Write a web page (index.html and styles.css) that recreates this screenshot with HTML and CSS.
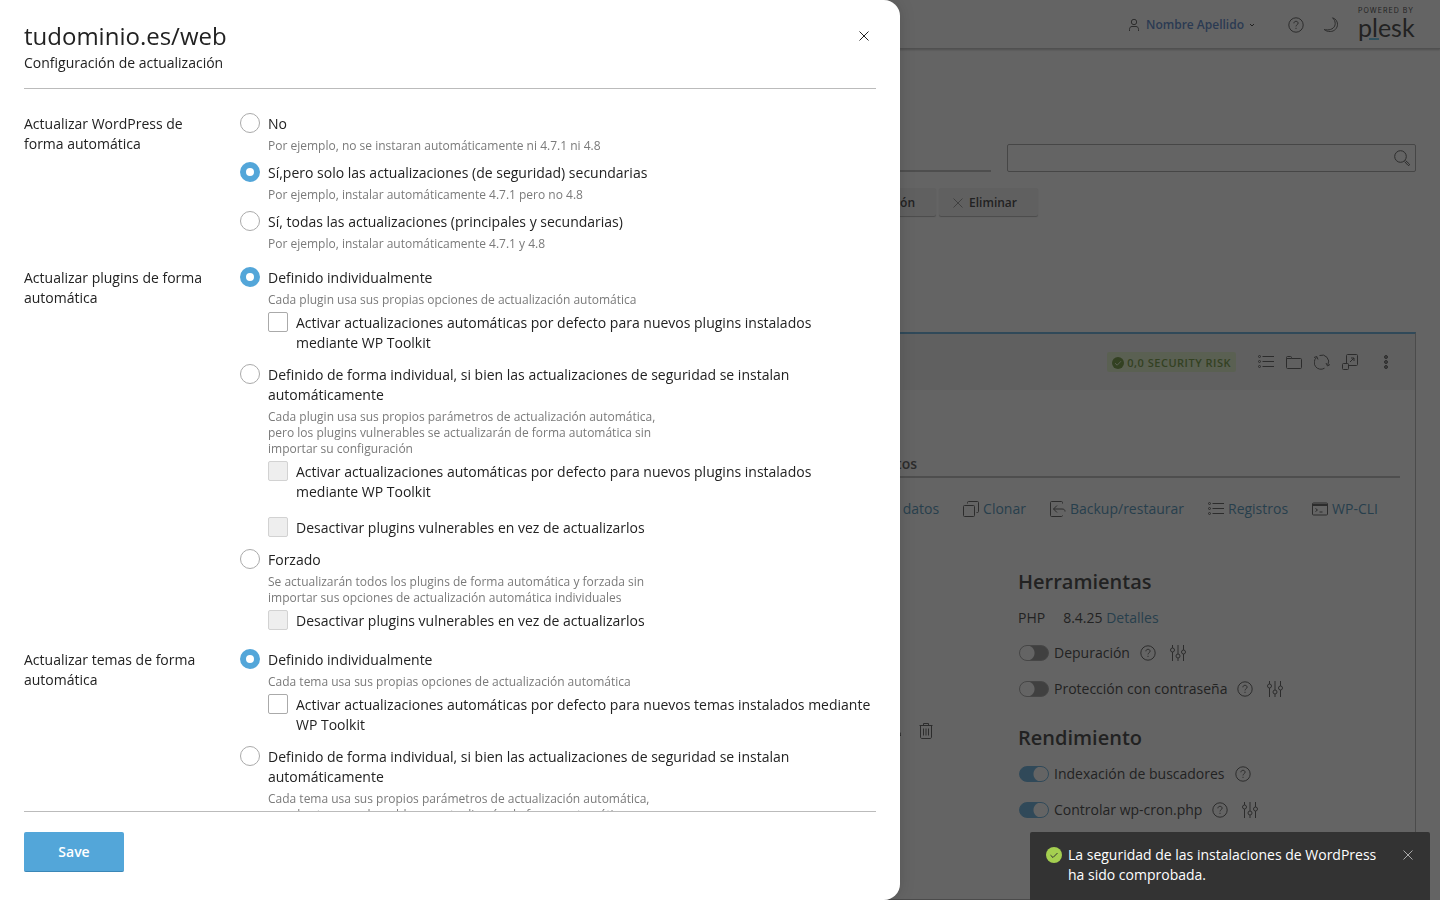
FILE: index.html
```html
<!DOCTYPE html>
<html lang="es">

<head>
    <meta charset="UTF-8">
    <meta name="viewport" content="width=device-width, initial-scale=1.0">
    <title>tudominio.es/web</title>
    <link rel="stylesheet" href="styles.css">
</head>

<body>
    <!-- shared icons -->
    <svg class="sprite" aria-hidden="true">
        <symbol id="i-help" viewBox="0 0 16 16">
            <circle cx="8" cy="8" r="7.2" />
            <path d="M5.9 6.3c0-1.2.9-2 2.1-2s2.1.8 2.1 1.9c0 1.5-2.1 1.6-2.1 3.2M8 10.8v1.1" />
        </symbol>
        <symbol id="i-list" viewBox="0 0 16 16">
            <circle cx="1.5" cy="2.5" r="1" /><circle cx="1.5" cy="7.5" r="1" /><circle cx="1.5" cy="12.5" r="1" />
            <path d="M4.500 2.500H16M4.500 7.500H16M4.500 12.500H16" />
        </symbol>
        <symbol id="i-sliders" viewBox="0 0 16 16">
            <path d="M2.500 0v3M2.500 7v9M8 0v9M8 13v3M13.500 0v5M13.500 9v7" />
            <circle cx="2.500" cy="5" r="2" /><circle cx="8" cy="11" r="2" /><circle cx="13.500" cy="7" r="2" />
        </symbol>
        <symbol id="i-cross" viewBox="0 0 16 16">
            <path d="M3.500 3.500l9 9M12.500 3.500l-9 9" />
        </symbol>
        <symbol id="i-user" viewBox="0 0 16 16">
            <circle cx="8" cy="5" r="2.700" />
            <path d="M3.500 14v-1.500c0-2 1-3 2.500-3h4c1.500 0 2.500 1 2.500 3V14" />
        </symbol>
    </svg>

    <div class="page">
        <header class="topbar">
            <a class="user" href="#">
                <svg class="icon"><use href="#i-user" /></svg>
                <span>Nombre Apellido</span>
                <svg class="caret" viewBox="0 0 8 8"><path d="M2 3l2 2 2-2" /></svg>
            </a>
            <button class="icon-btn" type="button" aria-label="Ayuda"><svg class="icon"><use href="#i-help" /></svg></button>
            <button class="icon-btn" type="button" aria-label="Tema"><svg class="icon" viewBox="0 0 16 16"><path d="M9.500.8c3 .8 5 3.400 5 6.500 0 4-3.200 7.200-7.200 7.200-2.600 0-4.800-.6-6.100-2 1 .3 2.100.4 3.300.4 4.500 0 7.700-2.700 7.700-6.300 0-2.200-.9-4.300-2.700-5.800z" /></svg></button>
            <div class="brand">
                <span class="brand__by">POWERED BY</span>
                <span class="brand__name">plesk</span>
            </div>
        </header>

        <main class="main">
            <div class="filters">
                <div class="filters__tabs"></div>
                <div class="search">
                    <input type="text" aria-label="Buscar">
                    <svg class="icon" viewBox="0 0 16 16"><circle cx="6.500" cy="6.500" r="5.800" /><path d="M10.500 11.500l3.500 3.800c.9.700 2-.5 1.300-1.300l-3.800-3.500" /></svg>
                </div>
            </div>

            <div class="toolbar">
                <button class="btn" type="button">Configuración</button>
                <button class="btn" type="button"><svg class="icon"><use href="#i-cross" /></svg>Eliminar</button>
            </div>

            <section class="site">
                <div class="site__head">
                    <span class="badge">
                        <svg class="badge__icon" viewBox="0 0 12 12"><circle cx="6" cy="6" r="6" /><path d="M3 6.200l2.200 2L9 4.200" /></svg>
                        0,0 SECURITY RISK
                    </span>
                    <div class="site__actions">
                        <button class="icon-btn" type="button" aria-label="Registros"><svg class="icon"><use href="#i-list" /></svg></button>
                        <button class="icon-btn" type="button" aria-label="Archivos"><svg class="icon" viewBox="0 0 16 16"><path d="M.5 4.500v-1c0-.6.400-1 1-1h3c.6 0 1 .4 1 1v1h9c.6 0 1 .4 1 1v8c0 .6-.4 1-1 1h-13c-.6 0-1-.4-1-1zh5" /></svg></button>
                        <button class="icon-btn" type="button" aria-label="Actualizar"><svg class="icon" viewBox="0 0 16 16"><path d="M5.500 1.500A6.700 6.700 0 0 1 13.800 11M16 10.500l-2.500 1.500-1.500-3M0 3.500L2.800 2.500 4 5.500M10.500 14.200A6.700 6.700 0 0 1 2.500 3.500" /></svg></button>
                        <button class="icon-btn" type="button" aria-label="Abrir"><svg class="icon" viewBox="0 0 16 16"><path d="M4.500 9V1.500c0-.6.400-1 1-1h9c.6 0 1 .4 1 1v9c0 .6-.4 1-1 1H7M8 8l4-4M9 4h3v3" /><rect x=".5" y="9.500" width="6" height="6" rx="1" /></svg></button>
                    </div>
                    <button class="icon-btn" type="button" aria-label="Más"><svg class="icon icon--dots" viewBox="0 0 16 16"><circle cx="8" cy="3" r="1.500" /><circle cx="8" cy="8" r="1.500" /><circle cx="8" cy="13" r="1.500" /></svg></button>
                </div>

                <div class="site__body">
                    <div class="tabs"><a href="#">Complementos</a></div>

                    <nav class="links">
                        <a href="#">Base de datos</a>
                        <a href="#"><svg class="icon" viewBox="0 0 16 16"><rect x=".5" y="4.500" width="11" height="11" rx="1" /><path d="M4.500 2.500v-1c0-.6.400-1 1-1h9c.6 0 1 .4 1 1v9c0 .6-.4 1-1 1h-1" /></svg>Clonar</a>
                        <a href="#"><svg class="icon" viewBox="0 0 16 16"><path d="M12.500 2.500v-1c0-.6-.4-1-1-1h-10c-.6 0-1 .4-1 1v13c0 .6.400 1 1 1h10c.6 0 1-.4 1-1M7 4.500L3.500 8 7 11.500M3.500 8H12c2 0 3 .8 3 2.500" /></svg>Backup/restaurar</a>
                        <a href="#"><svg class="icon"><use href="#i-list" /></svg>Registros</a>
                        <a href="#"><svg class="icon" viewBox="0 0 16 16"><rect x=".5" y="2" width="15" height="12" rx="1" /><path d="M1 3.500h14M1 4.500h14M3.500 7.500l2 1.500-2 1.500M7.500 11h3" /></svg>WP-CLI</a>
                    </nav>

                    <div class="columns">
                        <div class="columns__left">
                            <button class="icon-btn" type="button" aria-label="Usuario"><svg class="icon"><use href="#i-user" /></svg></button>
                            <button class="icon-btn" type="button" aria-label="Eliminar"><svg class="icon icon--trash" viewBox="0 0 16 18"><path d="M1.500 3.500h13M5.500 3.500V1.500h5v2M2.500 3.500v11.500c0 1 .6 1.500 1.500 1.500h8c.9 0 1.500-.5 1.500-1.500V3.500M5.500 6.500v7M8 6.500v7M10.500 6.500v7" /></svg></button>
                        </div>
                        <div class="tools">
                            <h2>Herramientas</h2>
                            <p class="php"><span>PHP</span><span>8.4.25 <a href="#">Detalles</a></span></p>
                            <div class="tool">
                                <label><input class="switch" type="checkbox">Depuración</label>
                                <svg class="icon"><use href="#i-help" /></svg>
                                <svg class="icon icon--sliders"><use href="#i-sliders" /></svg>
                            </div>
                            <div class="tool">
                                <label><input class="switch" type="checkbox">Protección con contraseña</label>
                                <svg class="icon"><use href="#i-help" /></svg>
                                <svg class="icon icon--sliders"><use href="#i-sliders" /></svg>
                            </div>
                            <h2>Rendimiento</h2>
                            <div class="tool">
                                <label><input class="switch" type="checkbox" checked>Indexación de buscadores</label>
                                <svg class="icon"><use href="#i-help" /></svg>
                            </div>
                            <div class="tool">
                                <label><input class="switch" type="checkbox" checked>Controlar wp-cron.php</label>
                                <svg class="icon"><use href="#i-help" /></svg>
                                <svg class="icon icon--sliders"><use href="#i-sliders" /></svg>
                            </div>
                        </div>
                    </div>
                </div>
            </section>
        </main>
    </div>

    <div class="overlay"></div>

    <form class="drawer">
        <header class="drawer__head">
            <div>
                <h1>tudominio.es/web</h1>
                <p>Configuración de actualización</p>
            </div>
            <button class="icon-btn drawer__close" type="button" aria-label="Cerrar"><svg class="icon"><use href="#i-cross" /></svg></button>
        </header>

        <div class="drawer__body">
            <div class="row" role="radiogroup" aria-labelledby="l-core">
                <div class="row__label" id="l-core">Actualizar WordPress de forma automática</div>
                <div class="row__field">
                    <div class="option">
                        <label class="check"><input type="radio" name="core">No</label>
                        <p class="hint">Por ejemplo, no se instaran automáticamente ni 4.7.1 ni 4.8</p>
                    </div>
                    <div class="option">
                        <label class="check"><input type="radio" name="core" checked>Sí,pero solo las actualizaciones (de seguridad) secundarias</label>
                        <p class="hint">Por ejemplo, instalar automáticamente 4.7.1 pero no 4.8</p>
                    </div>
                    <div class="option">
                        <label class="check"><input type="radio" name="core">Sí, todas las actualizaciones (principales y secundarias)</label>
                        <p class="hint">Por ejemplo, instalar automáticamente 4.7.1 y 4.8</p>
                    </div>
                </div>
            </div>

            <div class="row" role="radiogroup" aria-labelledby="l-plugins">
                <div class="row__label" id="l-plugins">Actualizar plugins de forma automática</div>
                <div class="row__field">
                    <div class="option">
                        <label class="check"><input type="radio" name="plugins" checked>Definido individualmente</label>
                        <p class="hint">Cada plugin usa sus propias opciones de actualización automática</p>
                        <div class="suboptions">
                            <label class="check"><input type="checkbox">Activar actualizaciones automáticas por defecto para nuevos plugins instalados mediante WP Toolkit</label>
                        </div>
                    </div>
                    <div class="option">
                        <label class="check"><input type="radio" name="plugins">Definido de forma individual, si bien las actualizaciones de seguridad se instalan automáticamente</label>
                        <p class="hint">Cada plugin usa sus propios parámetros de actualización automática, pero los plugins vulnerables se actualizarán de forma automática sin importar su configuración</p>
                        <div class="suboptions">
                            <label class="check"><input type="checkbox" disabled>Activar actualizaciones automáticas por defecto para nuevos plugins instalados mediante WP Toolkit</label>
                            <label class="check"><input type="checkbox" disabled>Desactivar plugins vulnerables en vez de actualizarlos</label>
                        </div>
                    </div>
                    <div class="option">
                        <label class="check"><input type="radio" name="plugins">Forzado</label>
                        <p class="hint">Se actualizarán todos los plugins de forma automática y forzada sin importar sus opciones de actualización automática individuales</p>
                        <div class="suboptions">
                            <label class="check"><input type="checkbox" disabled>Desactivar plugins vulnerables en vez de actualizarlos</label>
                        </div>
                    </div>
                </div>
            </div>

            <div class="row" role="radiogroup" aria-labelledby="l-themes">
                <div class="row__label" id="l-themes">Actualizar temas de forma automática</div>
                <div class="row__field">
                    <div class="option">
                        <label class="check"><input type="radio" name="themes" checked>Definido individualmente</label>
                        <p class="hint">Cada tema usa sus propias opciones de actualización automática</p>
                        <div class="suboptions">
                            <label class="check"><input type="checkbox">Activar actualizaciones automáticas por defecto para nuevos temas instalados mediante WP Toolkit</label>
                        </div>
                    </div>
                    <div class="option">
                        <label class="check"><input type="radio" name="themes">Definido de forma individual, si bien las actualizaciones de seguridad se instalan automáticamente</label>
                        <p class="hint">Cada tema usa sus propios parámetros de actualización automática, pero los temas vulnerables se actualizarán de forma automática</p>
                    </div>
                </div>
            </div>
        </div>

        <footer class="drawer__foot">
            <button class="save" type="submit">Save</button>
        </footer>
    </form>

    <div class="toast" role="status">
        <svg class="icon toast__ok" viewBox="0 0 16 16"><circle cx="8" cy="8" r="8" /><path d="M4.500 8.200l2.500 2.300 4.500-4.500" /></svg>
        <p>La seguridad de las instalaciones de WordPress ha sido comprobada.</p>
        <button class="icon-btn" type="button" aria-label="Cerrar"><svg class="icon"><use href="#i-cross" /></svg></button>
    </div>
</body>

</html>
```
FILE: styles.css
```css
* {
    box-sizing: border-box;
}

body {
    margin: 0;
    height: 100vh;
    overflow: hidden;
    font-family: "Open Sans", sans-serif;
    font-size: 14px;
    line-height: 20px;
    color: #222;
    background: #fff;
}

h1,
h2,
p {
    margin: 0;
}

a {
    color: #3484b0;
    text-decoration: none;
}

.sprite {
    position: absolute;
    width: 0;
    height: 0;
}

.icon {
    display: block;
    flex: none;
    width: 16px;
    height: 16px;
    fill: none;
    stroke: currentColor;
}

.icon-btn {
    display: block;
    padding: 0;
    border: 0;
    background: none;
    color: inherit;
}

.page .icon {
    color: #444;
}

/* page behind the drawer */

.topbar {
    display: flex;
    align-items: center;
    justify-content: flex-end;
    height: 49px;
    padding: 1px 24px 0 0;
    border-bottom: 1px solid #bbb;
    box-shadow: 0 1px 2px rgba(0, 0, 0, .3);
}

.user {
    display: flex;
    align-items: center;
    gap: 4px;
    margin-right: 32px;
    font-size: 12px;
    font-weight: 600;
    color: #3f74c4;
}

.caret {
    width: 8px;
    height: 8px;
    fill: none;
    stroke: #222;
}

.topbar .icon-btn {
    margin-right: 19px;
}

.brand {
    display: flex;
    flex-direction: column;
    align-self: flex-start;
    width: 58px;
    margin-top: 6px;
}

.brand__by {
    font: 7px/8px Inter, sans-serif;
    letter-spacing: 1px;
    white-space: nowrap;
}

.brand__name {
    position: relative;
    font: 25px/24px Lato, sans-serif;
}

.brand__name::after {
    content: "";
    position: absolute;
    left: 11px;
    bottom: -1px;
    width: 10px;
    height: 2px;
    background: #53bce6;
}

.main {
    padding: 95px 24px 0;
}

.filters {
    display: flex;
    gap: 16px;
}

.filters__tabs {
    flex: 1;
    border-bottom: 2px solid #b5b5b5;
}

.search {
    position: relative;
    width: 409px;
}

.search input {
    display: block;
    width: 100%;
    height: 28px;
    border: 1px solid #999;
    border-radius: 2px;
    background: none;
}

.search .icon {
    position: absolute;
    right: 6px;
    top: 6px;
}

.toolbar {
    display: flex;
    justify-content: flex-end;
    gap: 3px;
    margin-top: 16px;
    padding-right: 378px;
}

.btn {
    display: flex;
    align-items: center;
    gap: 3px;
    height: 28px;
    padding: 1px 21px 0 11px;
    border: 0;
    border-radius: 2px;
    background: #f0f0f0;
    box-shadow: 0 1px 1px #aaa;
    font: 600 12px/20px "Open Sans", sans-serif;
    color: #222;
}

.page .btn .icon {
    color: #888;
}

.site {
    margin-top: 116px;
    height: 568px;
    border: 1px solid #aaa;
    border-top: 2px solid #53a6d9;
}

.site__head {
    display: flex;
    align-items: center;
    justify-content: flex-end;
    height: 56px;
    padding-right: 21px;
    background: #f2f2f2;
}

.badge {
    display: flex;
    align-items: center;
    gap: 3px;
    height: 20px;
    margin-right: 22px;
    padding: 1px 5px 0;
    border-radius: 2px;
    background: #dcf0c4;
    font-size: 11px;
    font-weight: 600;
    letter-spacing: 0.5px;
    color: #5c8a22;
}

.badge__icon {
    width: 12px;
    height: 12px;
    fill: #5c8a22;
    stroke: #dcf0c4;
}

.badge__icon circle {
    stroke: none;
}

.site__actions {
    display: flex;
    gap: 12px;
    margin-right: 20px;
}

.icon--dots {
    fill: #888;
}

.site__body {
    padding: 64px 15px 0;
}

.tabs {
    padding: 0 483px 2px 0;
    border-bottom: 2px solid #b5b5b5;
    text-align: right;
    font-weight: 600;
}

.tabs a {
    display: block;
    color: #444;
}

.links {
    display: flex;
    justify-content: flex-end;
    gap: 24px;
    margin-top: 21px;
    padding-right: 22px;
}

.links a {
    display: flex;
    align-items: center;
    gap: 4px;
}

.columns {
    display: flex;
    margin-top: 50px;
}

.columns__left {
    display: flex;
    flex: 1;
    align-items: flex-start;
    justify-content: flex-end;
    gap: 14px;
    padding: 153px 84px 0 0;
}

.icon--trash {
    height: 18px;
}

.tools {
    width: 382px;
}

.tools h2 {
    margin-bottom: 13px;
    font-size: 20px;
    line-height: 26px;
    font-weight: 600;
}

.tools h2 ~ h2 {
    margin-top: 26px;
}

.php {
    display: flex;
    gap: 18px;
    margin-bottom: 15px;
}

.tool {
    display: flex;
    align-items: center;
    gap: 14px;
    margin-bottom: 16px;
}

.tool label {
    display: flex;
    align-items: center;
    gap: 4px;
    margin-right: -4px;
}

.switch {
    appearance: none;
    width: 30px;
    height: 16px;
    margin: 0 1px;
    border: 1px solid #999;
    border-radius: 8px;
    background: radial-gradient(circle at 7px 7px, #fff 7px, #888 8px);
}

.switch:checked {
    border-color: #53a6d9;
    background: radial-gradient(circle at 21px 7px, #fff 7px, #53a6d9 8px);
}

.overlay {
    position: fixed;
    inset: 0;
    background: rgba(34, 34, 34, .7);
}

/* drawer */

.drawer {
    position: fixed;
    top: 0;
    bottom: 0;
    left: 0;
    display: flex;
    flex-direction: column;
    width: 900px;
    max-width: 100%;
    padding: 0 24px;
    border-radius: 0 16px 16px 0;
    background: #fff;
    box-shadow: 0 0 16px rgba(0, 0, 0, .15);
}

.drawer__head {
    display: flex;
    justify-content: space-between;
    padding: 20px 0 15px;
    border-bottom: 1px solid #bbb;
}

.drawer__head h1 {
    margin-bottom: 1px;
    font-size: 24px;
    line-height: 32px;
    font-weight: 400;
}

.drawer__close {
    align-self: flex-start;
    margin: 8px 4px 0 0;
}

.drawer__body {
    flex: 1;
    min-height: 0;
    padding: 25px 0;
    overflow-y: auto;
    scrollbar-width: none;
}

.row {
    display: grid;
    grid-template-columns: 192px 1fr;
    column-gap: 24px;
    margin-bottom: 7px;
}

.row__label {
    padding-right: 8px;
}

.option {
    padding-bottom: 8px;
}

.check {
    display: flex;
    gap: 8px;
}

.check input {
    appearance: none;
    flex: none;
    width: 20px;
    height: 20px;
    margin: -1px 0 0;
    border: 1px solid #aaa;
    border-radius: 2px;
    background: #fff;
}

.check input[type="radio"] {
    border-radius: 50%;
}

.check input[type="radio"]:checked {
    border: 6px solid #53a6d9;
}

.check input:disabled {
    border-color: #d2d2d2;
    background: #eee;
}

.hint {
    max-width: 428px;
    padding: 4px 0 1px 28px;
    font-size: 12px;
    line-height: 16px;
    color: #7a7a7a;
}

.suboptions {
    display: grid;
    gap: 16px;
    padding: 4px 0 4px 28px;
}

.drawer__foot {
    padding: 20px 0 28px;
    border-top: 1px solid #bbb;
}

.save {
    display: block;
    width: 100px;
    height: 40px;
    padding-top: 2px;
    border: 0;
    border-bottom: 1px solid #3a87b7;
    border-radius: 2px;
    background: #53a6d9;
    font: 600 14px/20px "Open Sans", sans-serif;
    color: #fff;
}

/* notification */

.toast {
    position: fixed;
    right: 10px;
    bottom: 0;
    display: flex;
    align-items: flex-start;
    gap: 6px;
    width: 400px;
    padding: 13px 14px 15px 16px;
    border-radius: 2px 2px 0 0;
    background: #333;
    color: #fff;
}

.toast p {
    flex: 1;
}

.toast .icon {
    margin-top: 2px;
    color: #aaa;
}

.toast__ok {
    fill: #a4cf50;
}

.toast__ok path {
    fill: none;
    stroke: #333;
}

.toast__ok circle {
    stroke: none;
}
```
